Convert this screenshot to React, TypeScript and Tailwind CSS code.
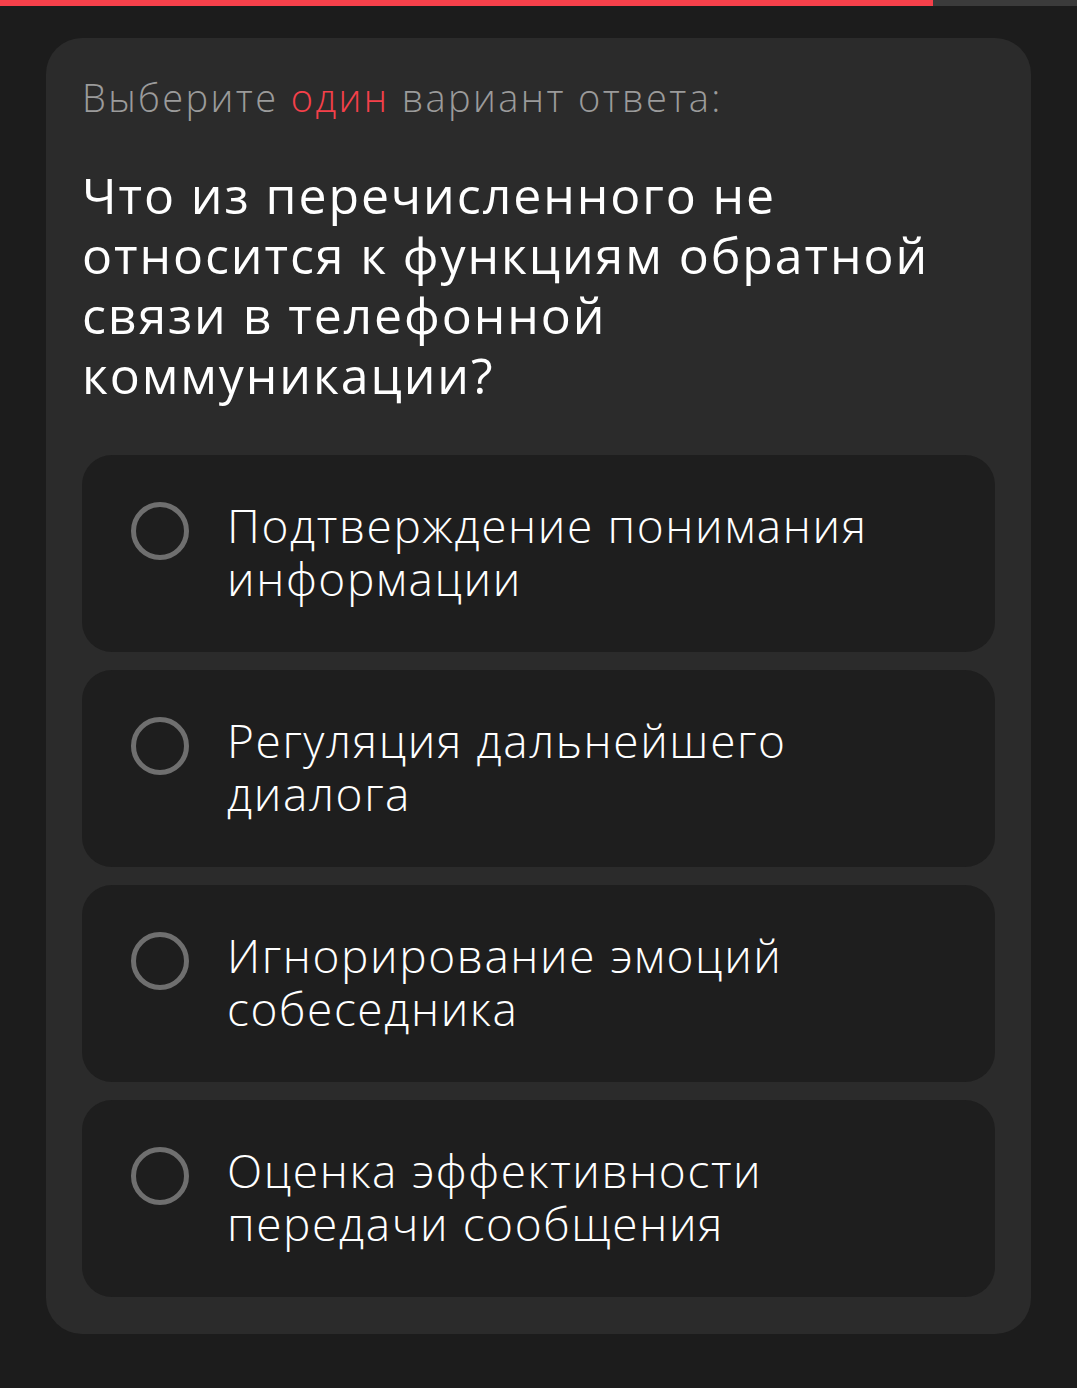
import React from "react";

const options = [
  ["Подтверждение понимания", "информации"],
  ["Регуляция дальнейшего", "диалога"],
  ["Игнорирование эмоций", "собеседника"],
  ["Оценка эффективности", "передачи сообщения"],
];

export default function App() {
  return (
    <div className="min-h-[1388px] w-full bg-[#1c1c1c]" style={{ fontFamily: "'Open Sans', Lato, sans-serif" }}>
      <div className="flex h-[6px] w-full">
        <div className="h-full w-[933px] bg-[#f5404a]" />
        <div className="h-full flex-1 bg-[#3b3b3b]" />
      </div>
      <div className="px-[46px] pt-[32px]">
        <div className="rounded-[36px] bg-[#2b2b2b] px-[36px] pt-[37px] pb-[37px]">
          <div className="text-[38px] leading-[44px] font-light tracking-[2.4px] text-[#9b9b9b]">
            Выберите <span className="text-[#f5404a]">один</span> вариант ответа:
          </div>
          <div className="mt-[46px] text-[50px] leading-[60px] font-medium tracking-[1.9px] text-white">
            Что из перечисленного не
            <br />
            относится к функциям обратной
            <br />
            связи в телефонной
            <br />
            коммуникации?
          </div>
          <div className="mt-[50px] flex flex-col gap-[18px]">
            {options.map((o, i) => (
              <div key={i} className="flex h-[197px] items-start rounded-[30px] bg-[#1e1e1e] pl-[49px] pt-[44px]">
                <div className="mt-[3px] h-[58px] w-[58px] shrink-0 rounded-full border-[5px] border-[#6f6f6f]" />
                <div className="ml-[38px] text-[46px] leading-[53px] font-light tracking-[1.6px] text-white">
                  {o[0]}
                  <br />
                  {o[1]}
                </div>
              </div>
            ))}
          </div>
        </div>
      </div>
    </div>
  );
}
